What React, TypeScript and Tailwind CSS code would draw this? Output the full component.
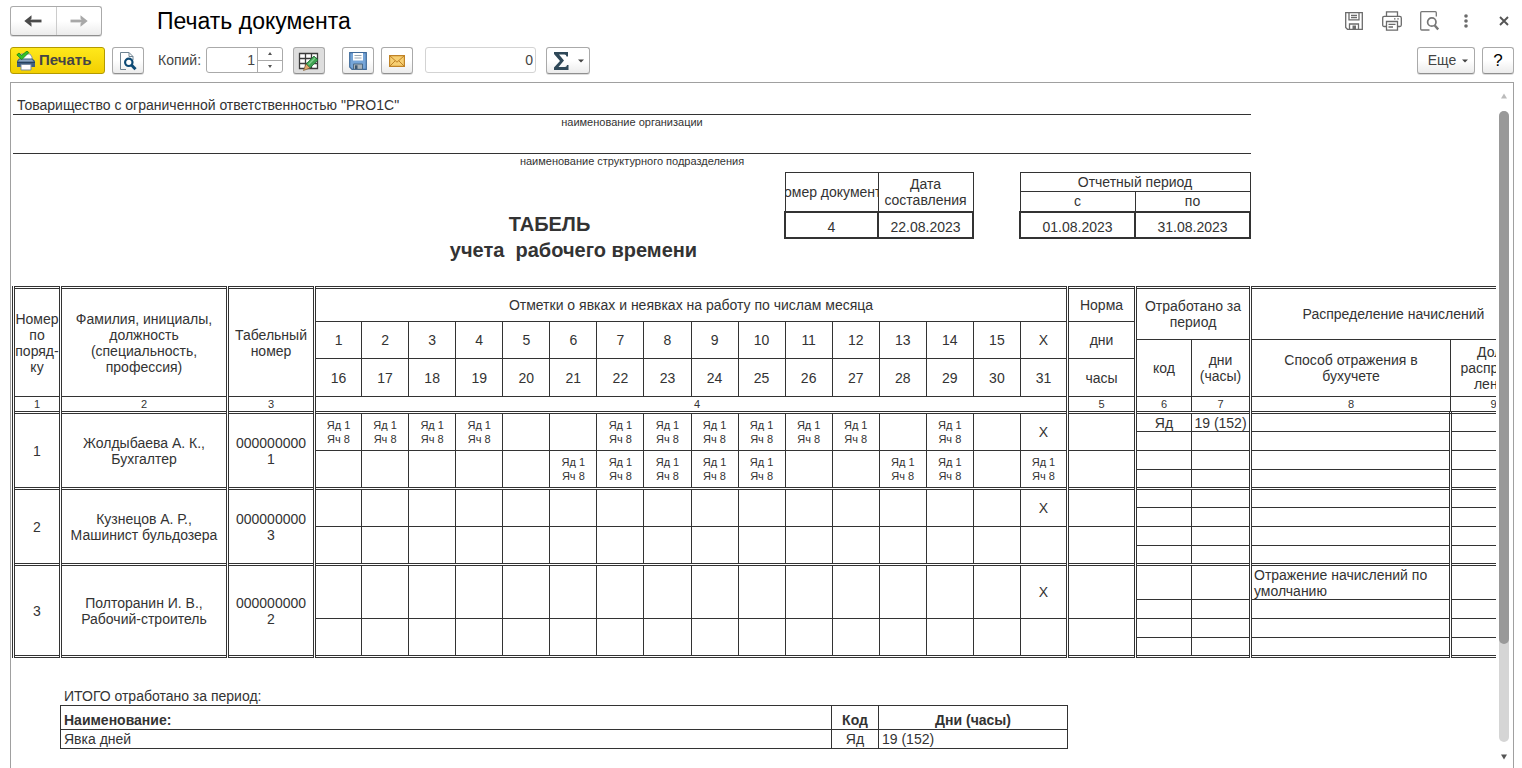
import { useState } from "react";
import type { ReactNode } from "react";
import clsx from "clsx";

type Employee = {
  num: number;
  name: string;
  position: string;
  code: string[];
  firstHalf: number[];
  secondHalf: number[];
  rows: { code: string; days: string; method: string }[];
};

const emptyRow = { code: "", days: "", method: "" };

const employees: Employee[] = [
  {
    num: 1,
    name: "Жолдыбаева А. К.,",
    position: "Бухгалтер",
    code: ["000000000", "1"],
    firstHalf: [1, 2, 3, 4, 7, 8, 9, 10, 11, 12, 14],
    secondHalf: [21, 22, 23, 24, 25, 28, 29, 31],
    rows: [{ code: "Яд", days: "19 (152)", method: "" }, emptyRow, emptyRow, emptyRow],
  },
  {
    num: 2,
    name: "Кузнецов А. Р.,",
    position: "Машинист бульдозера",
    code: ["000000000", "3"],
    firstHalf: [],
    secondHalf: [],
    rows: [emptyRow, emptyRow, emptyRow, emptyRow],
  },
  {
    num: 3,
    name: "Полторанин И. В.,",
    position: "Рабочий-строитель",
    code: ["000000000", "2"],
    firstHalf: [],
    secondHalf: [],
    rows: [
      { code: "", days: "", method: "Отражение начислений по умолчанию" },
      emptyRow,
      emptyRow,
      emptyRow,
    ],
  },
];

const firstDays = Array.from({ length: 15 }, (_, i) => i + 1);
const secondDays = Array.from({ length: 16 }, (_, i) => i + 16);

const cell = "border border-[#333] p-0 font-normal";
// double line on the left and right edges of a section
const section = "border-x-[3px] [border-inline-style:double]";

function ToolButton({
  label,
  className,
  children,
}: {
  label: string;
  className?: string;
  children: ReactNode;
}) {
  return (
    <button
      aria-label={label}
      className={clsx(
        "flex h-[27px] items-center justify-center rounded-[3px] border border-[#aaa] border-b-[#8f8f8f] shadow-[0_1px_0_#ddd]",
        className ?? "w-8 bg-linear-to-b from-white from-50% to-[#ececec]",
      )}
    >
      {children}
    </button>
  );
}

function Caret() {
  return (
    <svg width="6" height="4" viewBox="0 0 6 4" fill="#444">
      <path d="M0 0.5h6L3 3.5z" />
    </svg>
  );
}

function Arrow({ color, flip }: { color: string; flip?: boolean }) {
  return (
    <svg width="18" height="14" viewBox="0 0 18 14" className={flip ? "-scale-x-100" : ""}>
      <path d="M4 7H17.5" fill="none" stroke={color} strokeWidth="2.8" />
      <path d="M0.3 7L7.500 1.200V4.500L5.500 7L7.500 9.500V12.800z" fill={color} />
    </svg>
  );
}

function PrinterIcon() {
  return (
    <svg width="20" height="20" viewBox="0 0 20 20">
      <path d="M5 3h9l2 3v3H5z" fill="#fff" stroke="#8a99a8" />
      <path d="M3 7.500h13.500L19 10v6H1v-6z" fill="#3f5f80" />
      <path d="M3.500 8.500h12.500l1.500 2H2z" fill="#8aa5c0" />
      <path d="M1 11.500h18" stroke="#26415c" />
      <path d="M5 13.500h10v5.500H5z" fill="#fff" stroke="#7b8da0" />
      <path d="M0.800 3.800l2.200-1.800 2.600 2.400L11 0l1.800 1.600L5.800 8.600z" fill="#35c22a" stroke="#13820f" strokeWidth="0.8" />
    </svg>
  );
}

function PreviewIcon() {
  return (
    <svg width="18" height="20" viewBox="0 0 18 20">
      <path d="M1.500 18.500V1.500h8.500l4 4V9M1.500 18.500H7" fill="none" stroke="#6e8291" />
      <path d="M10 1.500v4h4" fill="none" stroke="#6e8291" />
      <circle cx="9.800" cy="11.300" r="3.700" fill="#fff" stroke="#0d4a75" strokeWidth="2.200" />
      <path d="M12.500 14l4 4.200" stroke="#0d4a75" strokeWidth="3" />
    </svg>
  );
}

function EditTableIcon() {
  return (
    <svg width="22" height="20" viewBox="0 0 22 20">
      <path d="M1.500 2.500h18v15h-18z" fill="#fff" stroke="#3c3c3c" strokeWidth="1.300" />
      <path d="M1.500 7.500h18M1.500 12.500h18M7.500 2.500v15M13.500 2.500v15" stroke="#3c3c3c" strokeWidth="1.300" />
      <path d="M8 13L16 5l4 4L12 17z" fill="#3fa352" stroke="#1f6e34" strokeWidth="0.800" />
      <path d="M8 13l4 4-6.500 2.500z" fill="#e0a96c" stroke="#7d5a35" strokeWidth="0.700" />
      <path d="M10.500 13.500L17 7" stroke="#7fd08c" strokeWidth="1.500" />
    </svg>
  );
}

function FloppyIcon() {
  return (
    <svg width="18" height="18" viewBox="0 0 18 18">
      <path d="M0.700 0.700h16.600v16.600H3L0.700 15z" fill="#76a5d8" stroke="#3f6a9a" strokeWidth="1.200" />
      <path d="M4 1h10v7.500H4z" fill="#fff" />
      <path d="M5.500 3.500h7M5.500 6h7" stroke="#9aa7b3" />
      <path d="M4.500 12h9v5.300h-9z" fill="#a9b3ba" stroke="#4c6a86" />
      <path d="M6 13.300h2.500v3.700H6z" fill="#3b5772" />
    </svg>
  );
}

function MailIcon() {
  return (
    <svg width="16" height="12" viewBox="0 0 16 12">
      <path d="M0.600 0.600h14.800v10.800H0.600z" fill="#f7cf72" stroke="#c08327" strokeWidth="1.200" />
      <path d="M0.800 0.800L8 7.200l7.200-6.400M0.800 11.200l5.400-5.400M15.200 11.200L9.800 5.800" fill="none" stroke="#c08327" />
    </svg>
  );
}

function SaveOutline() {
  return (
    <svg width="18" height="18" viewBox="0 0 18 18" fill="none" stroke="#6b6b6b" strokeWidth="1.300">
      <path d="M0.700 0.700h16.600v16.600H2.500L0.700 15.500z" />
      <path d="M4 1v6.800h10V1M6 3.300h6M6 5.500h6M4.500 17v-5h9v5" />
      <path d="M7.500 13.500H11V17H7.500z" fill="#6b6b6b" stroke="none" />
    </svg>
  );
}

function PrintOutline() {
  return (
    <svg width="20" height="20" viewBox="0 0 20 20" fill="none" stroke="#6b6b6b" strokeWidth="1.300">
      <path d="M4.500 5V0.800h11V5M4.500 15.500H2.200Q0.700 15.500 0.700 14V7Q0.700 5.300 2.200 5.300h15.600Q19.300 5.300 19.300 7v7q0 1.500-1.500 1.500h-2.300" />
      <path d="M4.500 10.500h11v8.700h-11zM6.500 13.300h7M6.500 16h4.500M12 7.800h1.500M15.300 7.800h1.500" />
    </svg>
  );
}

function PreviewOutline() {
  return (
    <svg width="19" height="20" viewBox="0 0 19 20" fill="none" stroke="#777">
      <path d="M9.500 19H1.700Q0.700 19 0.700 18V1.700Q0.700 0.700 1.700 0.700h13.600q1 0 1 1V5.500" strokeWidth="1.300" />
      <circle cx="11.800" cy="11" r="4.200" strokeWidth="1.700" />
      <path d="M14.800 14.500l3.400 4" strokeWidth="2.400" />
    </svg>
  );
}

function Mark() {
  return (
    <div className="text-[11px] leading-[14px]">
      Яд 1
      <br />
      Яч 8
    </div>
  );
}

function DocumentHead() {
  return (
    <div className="flex items-start">
      <h2 className="w-[772px] shrink-0 whitespace-pre pt-[39px] pl-[351px] text-center text-[20px] leading-[26px] font-bold">
        <span className="block pr-12">ТАБЕЛЬ</span>
        <span className="block">учета  рабочего времени</span>
      </h2>
      <table className="w-[190px] shrink-0 table-fixed border-collapse text-center leading-4">
        <colgroup>
          <col className="w-[93px]" />
          <col />
        </colgroup>
        <tbody>
          <tr className="h-[39px]">
            <th className={cell}>
              <div className="flex justify-center overflow-hidden">
                <span className="shrink-0">Номер документа</span>
              </div>
            </th>
            <th className={cell}>Дата составления</th>
          </tr>
          <tr className="h-[26px]">
            <td className="border-2 border-[#333] p-0 pt-[5px]">4</td>
            <td className="border-2 border-[#333] p-0 pt-[5px]">22.08.2023</td>
          </tr>
        </tbody>
      </table>
      <table className="ml-[45px] w-[232px] shrink-0 table-fixed border-collapse text-center leading-4">
        <tbody>
          <tr className="h-[19px]">
            <th className={cell} colSpan={2}>
              Отчетный период
            </th>
          </tr>
          <tr className="h-5">
            <th className={cell}>с</th>
            <th className={cell}>по</th>
          </tr>
          <tr className="h-[26px]">
            <td className="border-2 border-[#333] p-0 pt-[5px]">01.08.2023</td>
            <td className="border-2 border-[#333] p-0 pt-[5px]">31.08.2023</td>
          </tr>
        </tbody>
      </table>
    </div>
  );
}

function EmployeeRows({ employee }: { employee: Employee }) {
  const top = "border-t-[3px] [border-top-style:double]";
  return (
    <>
      {employee.rows.map((row, i) => (
        <tr key={i} className={row.method ? "h-[35px]" : "h-[19px]"}>
          {i === 0 && (
            <>
              <td rowSpan={4} className={clsx(cell, section, top)}>
                {employee.num}
              </td>
              <td rowSpan={4} className={clsx(cell, section, top)}>
                {employee.name}
                <br />
                {employee.position}
              </td>
              <td rowSpan={4} className={clsx(cell, section, top)}>
                {employee.code[0]}
                <br />
                {employee.code[1]}
              </td>
              {firstDays.map((day) => (
                <td key={day} rowSpan={2} className={clsx(cell, top)}>
                  {employee.firstHalf.includes(day) && <Mark />}
                </td>
              ))}
              <td rowSpan={2} className={clsx(cell, top)}>
                X
              </td>
              <td rowSpan={2} className={clsx(cell, section, top)}></td>
            </>
          )}
          {i === 2 && (
            <>
              {secondDays.map((day) => (
                <td key={day} rowSpan={2} className={cell}>
                  {employee.secondHalf.includes(day) && <Mark />}
                </td>
              ))}
              <td rowSpan={2} className={clsx(cell, section)}></td>
            </>
          )}
          <td className={clsx(cell, i === 0 && top)}>{row.code}</td>
          <td className={clsx(cell, i === 0 && top)}>{row.days}</td>
          <td className={clsx(cell, section, i === 0 && top, "pl-0.5 text-left")}>{row.method}</td>
          <td className={clsx(cell, i === 0 && top)}></td>
        </tr>
      ))}
    </>
  );
}

function TimesheetTable() {
  return (
    <table className="mt-[23px] w-[1526px] table-fixed border-collapse border-y-[3px] border-[#333] text-center leading-4 [border-block-style:double]">
      <colgroup>
        <col className="w-[47px]" />
        <col className="w-[167px]" />
        <col className="w-[87px]" />
        {secondDays.map((day) => (
          <col key={day} />
        ))}
        <col className="w-[68px]" />
        <col className="w-14" />
        <col className="w-[59px]" />
        <col className="w-[200px]" />
        <col className="w-[86px]" />
      </colgroup>
      <thead>
        <tr className="h-[34px]">
          <th rowSpan={4} className={clsx(cell, section)}>
            Номер
            <br />
            по
            <br />
            поряд-
            <br />
            ку
          </th>
          <th rowSpan={4} className={clsx(cell, section)}>
            Фамилия, инициалы,
            <br />
            должность
            <br />
            (специальность,
            <br />
            профессия)
          </th>
          <th rowSpan={4} className={clsx(cell, section)}>
            Табельный
            <br />
            номер
          </th>
          <th colSpan={16} className={cell}>
            Отметки о явках и неявках на работу по числам месяца
          </th>
          <th className={clsx(cell, section)}>Норма</th>
          <th rowSpan={2} colSpan={2} className={cell}>
            Отработано за
            <br />
            период
          </th>
          <th rowSpan={2} colSpan={2} className={clsx(cell, section)}>
            Распределение начислений
          </th>
        </tr>
        <tr className="h-[18px]">
          {firstDays.map((day) => (
            <th key={day} rowSpan={2} className={cell}>
              {day}
            </th>
          ))}
          <th rowSpan={2} className={cell}>
            X
          </th>
          <th rowSpan={2} className={clsx(cell, section)}>
            дни
          </th>
        </tr>
        <tr className="h-[19px]">
          <th rowSpan={2} className={cell}>
            код
          </th>
          <th rowSpan={2} className={cell}>
            дни
            <br />
            (часы)
          </th>
          <th rowSpan={2} className={clsx(cell, "border-l-[3px] [border-left-style:double]")}>
            Способ отражения в
            <br />
            бухучете
          </th>
          <th rowSpan={2} className={cell}>
            Доля
            <br />
            распреде-
            <br />
            ления
          </th>
        </tr>
        <tr className="h-[38px]">
          {secondDays.map((day) => (
            <th key={day} className={cell}>
              {day}
            </th>
          ))}
          <th className={clsx(cell, section)}>часы</th>
        </tr>
        <tr className="h-4 text-[11px] leading-3">
          <th className={clsx(cell, section)}>1</th>
          <th className={clsx(cell, section)}>2</th>
          <th className={clsx(cell, section)}>3</th>
          <th colSpan={16} className={clsx(cell, "pl-3")}>
            4
          </th>
          <th className={clsx(cell, section)}>5</th>
          <th className={cell}>6</th>
          <th className={cell}>7</th>
          <th className={clsx(cell, "border-l-[3px] [border-left-style:double]")}>8</th>
          <th className={cell}>9</th>
        </tr>
      </thead>
      <tbody>
        {employees.map((employee) => (
          <EmployeeRows key={employee.num} employee={employee} />
        ))}
      </tbody>
    </table>
  );
}

function SummaryTable() {
  return (
    <table className="ml-12 w-[1008px] table-fixed border-collapse text-center leading-4">
      <caption className="mt-[30px] pb-px pl-1 text-left">ИТОГО отработано за период:</caption>
      <colgroup>
        <col />
        <col className="w-[47px]" />
        <col className="w-[189px]" />
      </colgroup>
      <thead>
        <tr className="h-6">
          <th className="border border-[#333] p-0 pt-1 pl-[3px] text-left">Наименование:</th>
          <th className="border border-[#333] p-0 pt-1">Код</th>
          <th className="border border-[#333] p-0 pt-1">Дни (часы)</th>
        </tr>
      </thead>
      <tbody>
        <tr className="h-[19px]">
          <td className="border border-[#333] p-0 pl-[3px] text-left">Явка дней</td>
          <td className={cell}>Яд</td>
          <td className="border border-[#333] p-0 pl-[3px] text-left">19 (152)</td>
        </tr>
      </tbody>
    </table>
  );
}

export default function App() {
  const [copies, setCopies] = useState(1);

  return (
    <div className="flex h-screen flex-col overflow-hidden bg-white pr-2 pl-2.5 font-['Liberation_Sans',Arial,sans-serif] text-[14px] text-[#444]">
      <header className="flex h-[47px] shrink-0 items-start pt-1.5">
        <div className="flex h-[30px] w-[92px] rounded-[3px] border border-[#aaa] border-b-[#8f8f8f] bg-linear-to-b from-white from-50% to-[#ececec] shadow-[0_1px_0_#ddd]">
          <button aria-label="Назад" className="flex flex-1 items-center justify-center border-r border-[#ccc]">
            <Arrow color="#4a4a4a" />
          </button>
          <button aria-label="Вперед" className="flex flex-1 items-center justify-center">
            <Arrow color="#a8a8a8" flip />
          </button>
        </div>
        <h1 className="ml-[55px] flex-1 text-[23px] leading-[30px] text-black">Печать документа</h1>
        <div className="flex h-[30px] items-center pr-1">
          <button aria-label="Сохранить" className="mr-[19px]">
            <SaveOutline />
          </button>
          <button aria-label="Печать" className="mr-[18px]">
            <PrintOutline />
          </button>
          <button aria-label="Просмотр" className="mr-[25px]">
            <PreviewOutline />
          </button>
          <button aria-label="Меню" className="mr-[31px]">
            <svg width="4" height="14" viewBox="0 0 4 14" fill="#6b6b6b">
              <circle cx="2" cy="2" r="1.800" />
              <circle cx="2" cy="7" r="1.800" />
              <circle cx="2" cy="12" r="1.800" />
            </svg>
          </button>
          <button aria-label="Закрыть" className="mr-px">
            <svg width="10" height="10" viewBox="0 0 10 10" stroke="#555" strokeWidth="1.900">
              <path d="M1 1l8 8M9 1L1 9" />
            </svg>
          </button>
        </div>
      </header>

      <div className="flex h-[35px] shrink-0 items-start">
        <button className="flex h-[27px] w-[95px] items-center gap-[3px] rounded-[3px] border border-[#b39a00] bg-linear-to-b from-[#ffe81a] to-[#f2cf00] pl-[5px] text-[15px] font-bold text-[#444]">
          <PrinterIcon />
          Печать
        </button>
        <div className="ml-[7px]">
          <ToolButton label="Просмотр">
            <PreviewIcon />
          </ToolButton>
        </div>
        <label htmlFor="copies" className="ml-[14px] w-[48px] leading-[27px]">
          Копий:
        </label>
        <div className="flex h-[26px] w-[77px] rounded-[3px] border border-[#aaa]">
          <input
            id="copies"
            value={copies}
            onChange={(e) => setCopies(Number(e.target.value) || 1)}
            className="w-[50px] pr-0.5 text-right outline-none"
          />
          <div className="flex flex-1 flex-col border-l border-[#aaa]">
            <button
              aria-label="Больше"
              onClick={() => setCopies(copies + 1)}
              className="flex flex-1 items-center justify-center border-b border-[#aaa]"
            >
              <svg width="4" height="3" viewBox="0 0 4 3" fill="#555">
                <path d="M0 3h4L2 0z" />
              </svg>
            </button>
            <button
              aria-label="Меньше"
              onClick={() => setCopies(Math.max(1, copies - 1))}
              className="flex flex-1 items-center justify-center"
            >
              <svg width="4" height="3" viewBox="0 0 4 3" fill="#555">
                <path d="M0 0h4L2 3z" />
              </svg>
            </button>
          </div>
        </div>
        <div className="ml-2.5 flex">
          <ToolButton label="Редактирование" className="w-8 bg-[#dedede]">
            <EditTableIcon />
          </ToolButton>
        </div>
        <div className="ml-[17px] flex gap-[7px]">
          <ToolButton label="Сохранить">
            <FloppyIcon />
          </ToolButton>
          <ToolButton label="Отправить">
            <MailIcon />
          </ToolButton>
        </div>
        <input
          aria-label="Сумма"
          readOnly
          value="0"
          className="ml-3 h-[26px] w-[111px] rounded-[3px] border border-[#d3d3d3] pr-0.5 text-right outline-none"
        />
        <div className="ml-2.5">
          <ToolButton
            label="Итоги"
            className="w-[44px] gap-[9px] bg-linear-to-b from-white from-50% to-[#ececec] pl-px"
          >
            <svg width="15" height="18" viewBox="0 0 15 18" fill="#2f4858">
              <path d="M0 0h14v4.500h-1.500Q12.300 2.500 10.500 2.500H5L10 8.500L4.500 15H11Q12.800 15 13 13h1.500V18H0V15.500L6 9L0 2z" />
            </svg>
            <Caret />
          </ToolButton>
        </div>
        <div className="ml-auto flex gap-[7px]">
          <button className="flex h-[27px] w-[58px] items-center justify-center gap-1.5 rounded-[3px] border border-[#aaa] border-b-[#8f8f8f] bg-linear-to-b from-white from-50% to-[#ececec] pl-1 shadow-[0_1px_0_#ddd]">
            Еще
            <Caret />
          </button>
          <button className="h-[27px] w-8 rounded-[3px] border border-[#aaa] border-b-[#8f8f8f] bg-linear-to-b from-white from-50% to-[#ececec] text-[17px] text-black shadow-[0_1px_0_#ddd]">
            ?
          </button>
        </div>
      </div>

      <main className="flex min-h-0 flex-1 border border-b-0 border-[#a0a0a0]">
        <div className="min-w-0 flex-1 overflow-hidden pl-px text-[#333]">
          <div className="ml-px w-[1238px] text-center">
            <p className="h-8 border-b border-[#333] pt-3.5 pl-1 text-left leading-4">
              Товарищество с ограниченной ответственностью "PRO1C"
            </p>
            <p className="text-[11px] leading-[14px]">наименование организации</p>
            <div className="h-[25px] border-b border-[#333]"></div>
            <p className="text-[11px] leading-[14px]">наименование структурного подразделения</p>
          </div>
          <div className="mt-1">
            <DocumentHead />
            <TimesheetTable />
            <SummaryTable />
          </div>
        </div>
        <div className="flex w-[17px] shrink-0 flex-col items-center pt-2.5 pr-0.5 pb-2">
          <svg width="6" height="6" viewBox="0 0 6 6" fill="#bbb">
            <path d="M3 0.500L6 5.500H0z" />
          </svg>
          <div className="mt-3 w-2.5 flex-1 rounded-full bg-[#d5d5d5]">
            <div className="h-[84.5%] rounded-full bg-[#999]"></div>
          </div>
          <svg width="6" height="6" viewBox="0 0 6 6" fill="#555" className="mt-3">
            <path d="M3 5.500L6 0.500H0z" />
          </svg>
        </div>
      </main>
    </div>
  );
}
